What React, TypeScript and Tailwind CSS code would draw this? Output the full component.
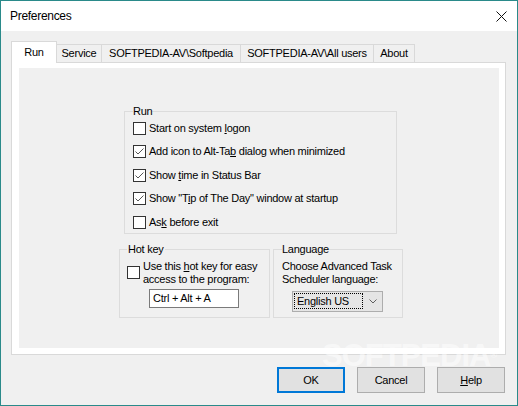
import React from 'react';

const Check = ({ checked }: { checked?: boolean }) => (
  <span className="w-[13px] h-[13px] border border-[#333] bg-white flex items-center justify-center shrink-0">
    {checked && (
      <svg width="11" height="11" viewBox="0 0 11 11">
        <polyline points="1.5,5.5 4,8 9.5,2.5" fill="none" stroke="#555" strokeWidth="1" />
      </svg>
    )}
  </span>
);

const Row = ({ checked, children }: { checked?: boolean; children: React.ReactNode }) => (
  <div className="flex items-center gap-[3px] h-[13px]">
    <Check checked={checked} />
    <span>{children}</span>
  </div>
);

export default function App() {
  const tabs = [
    { label: 'Service', w: 'w-[45px]' },
    { label: 'SOFTPEDIA-AV\\Softpedia', w: 'w-[139px]' },
    { label: 'SOFTPEDIA-AV\\All users', w: 'w-[133px]' },
    { label: 'About', w: 'w-[41px]' },
  ];

  return (
    <div
      className="relative w-[518px] h-[406px] border border-[#2a8a8a] bg-[#f0f0f0] flex flex-col text-[11px] leading-[13px] tracking-[-0.25px] text-black overflow-hidden"
      style={{ fontFamily: '"Liberation Sans", Arial, sans-serif' }}
    >
      {/* title bar */}
      <div className="h-[30px] bg-white flex items-center justify-between pl-[9px] pr-[10px] shrink-0">
        <span className="text-[12px] tracking-[-0.3px]">Preferences</span>
        <svg width="11" height="11" viewBox="0 0 11 11">
          <path d="M0.5 0.5 L10.5 10.5 M10.5 0.5 L0.5 10.5" stroke="#111" strokeWidth="1" />
        </svg>
      </div>

      <div className="flex-1 pt-[10px] pl-[10px] pr-[11px]">
        {/* tabs */}
        <div className="flex items-end h-[21px]">
          <div className="relative z-10 -mb-px w-[46px] h-[22px] bg-white border border-b-0 border-[#d9d9d9] flex items-center justify-center pb-[1px]">
            Run
          </div>
          {tabs.map((t) => (
            <div
              key={t.label}
              className={`${t.w} h-[18px] border-t border-r border-[#d9d9d9] bg-[#f0f0f0] flex items-center justify-center whitespace-nowrap`}
            >
              {t.label}
            </div>
          ))}
        </div>

        {/* tab page */}
        <div className="w-[495px] h-[293px] border border-[#d9d9d9] bg-white pl-[7px] pt-[5px] pr-[6px] pb-[6px]">
          <div className="w-full h-full bg-[#f0f0f0] flex flex-col">
            <fieldset className="ml-[105px] mt-[36.5px] w-[273px] border border-[#dcdcdc] pl-[8px] pt-[4px] pb-[4px] flex flex-col gap-[10.5px]">
              <legend className="leading-[13px]">Run</legend>
              <Row>
                Start on system <u>l</u>ogon
              </Row>
              <Row checked>
                Add icon to Alt-Ta<u>b</u> dialog when minimized
              </Row>
              <Row checked>
                Show <u>t</u>ime in Status Bar
              </Row>
              <Row checked>
                Show "T<u>i</u>p of The Day" window at startup
              </Row>
              <Row>
                As<u>k</u> before exit
              </Row>
            </fieldset>

            <div className="ml-[100px] mt-[9px] flex gap-[3px] items-stretch">
              <fieldset className="w-[151px] border border-[#dcdcdc] pl-[7px] pt-[4px] pb-[9px]">
                <legend className="px-[1px] leading-[13px]">Hot key</legend>
                <div className="flex items-center gap-[3px]">
                  <Check />
                  <span>
                    Use this <u>h</u>ot key for easy
                    <br />
                    access to the program:
                  </span>
                </div>
                <div className="ml-[22px] mt-[3.5px] w-[90px] h-[19px] border border-[#7a7a7a] bg-white pl-[3px] flex items-center">
                  Ctrl + Alt + A
                </div>
              </fieldset>

              <fieldset className="w-[130px] border border-[#dcdcdc] pl-[8px] pt-[4px] pb-[5px]">
                <legend className="leading-[13px]">Language</legend>
                <div>
                  Choose Advanced Task
                  <br />
                  Scheduler language:
                </div>
                <div className="ml-[10px] mt-[5px] w-[91px] h-[21px] border border-[#adadad] bg-[#e5e5e5] flex items-center pl-[1px] pr-[5px] justify-between">
                  <span className="h-[16px] w-[69px] border border-dotted border-black flex items-center pl-[2px]">
                    English US
                  </span>
                  <svg width="8" height="5" viewBox="0 0 8 5">
                    <polyline points="0.5,0.5 4,4 7.5,0.5" fill="none" stroke="#606060" strokeWidth="1" />
                  </svg>
                </div>
              </fieldset>
            </div>
          </div>
        </div>

        {/* buttons */}
        <div className="mt-[12px] mr-[1px] flex justify-end gap-[12px]">
          <button className="w-[68px] h-[26px] border-2 border-[#0078d7] bg-[#e1e1e1]">OK</button>
          <button className="w-[68px] h-[26px] border border-[#adadad] bg-[#e1e1e1]">Cancel</button>
          <button className="w-[68px] h-[26px] border border-[#adadad] bg-[#e1e1e1]">
            <u>H</u>elp
          </button>
        </div>
      </div>

      {/* watermark */}
      <div className="absolute left-[321px] top-[348px] text-[31px] font-bold tracking-[-1px] text-white/50 pointer-events-none">
        SOFTPEDIA<span className="text-[9px] align-top">®</span>
      </div>
    </div>
  );
}
